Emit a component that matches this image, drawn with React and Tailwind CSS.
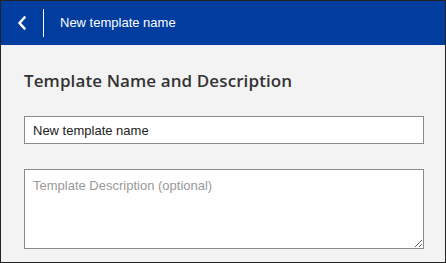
export default function App() {
  return (
    <div className="w-[446px] h-[263px] border border-[#222] bg-[#f3f3f3] flex flex-col overflow-hidden">
      <div className="h-[44px] bg-[#003d9e] flex items-center shrink-0">
        <div className="w-[42px] h-full flex items-center justify-center">
          <svg width="10" height="14" viewBox="0 0 10 14" className="ml-[0px]">
            <path d="M7.5 1.5 L2.5 7 L7.5 12.5" fill="none" stroke="white" strokeWidth="2.6" strokeLinecap="round" strokeLinejoin="round" />
          </svg>
        </div>
        <div className="w-px h-[28px] bg-white" />
        <div className="ml-[16px] text-white text-[13px] font-['Liberation_Sans',Arial,sans-serif]">New template name</div>
      </div>
      <div className="px-[23px] pt-[25px] flex flex-col">
        <h1 className="text-[17px] font-semibold text-[#333] font-['Open_Sans',sans-serif] leading-[22px] tracking-[0.1px]">Template Name and Description</h1>
        <input
          className="mt-[24px] h-[28px] w-[400px] bg-white border border-[#8a8a8a] px-[8px] text-[13px] text-[#222] font-['Liberation_Sans',Arial,sans-serif] outline-none"
          defaultValue="New template name"
        />
        <textarea
          className="mt-[25px] h-[80px] w-[400px] bg-white border border-[#8a8a8a] px-[8px] py-[6px] text-[13px] text-[#222] placeholder:text-[#999] font-['Liberation_Sans',Arial,sans-serif] outline-none resize"
          placeholder="Template Description (optional)"
        />
      </div>
    </div>
  );
}
